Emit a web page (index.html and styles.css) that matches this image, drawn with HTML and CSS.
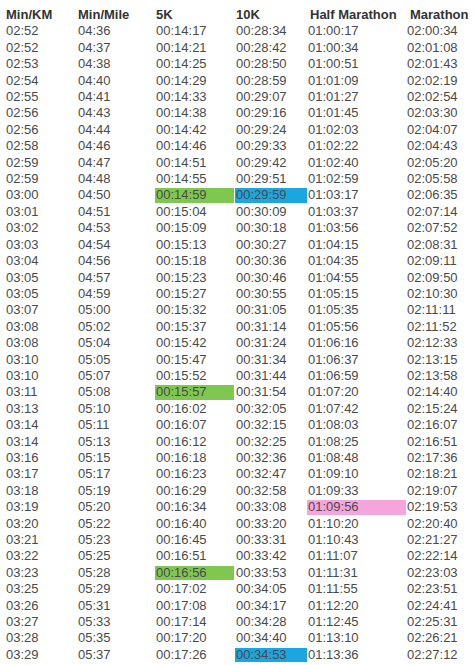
FILE: index.html
```html
<!DOCTYPE html>
<html>
<head>
<meta charset="utf-8">
<link rel="stylesheet" href="styles.css">
</head>
<body>
<div class="table">
<div class="row head"><span>Min/KM</span><span>Min/Mile</span><span>5K</span><span>10K</span><span class="half">Half Marathon</span><span class="mar">Marathon</span></div>
<div class="row"><span>02:52</span><span>04:36</span><span>00:14:17</span><span>00:28:34</span><span>01:00:17</span><span>02:00:34</span></div>
<div class="row"><span>02:52</span><span>04:37</span><span>00:14:21</span><span>00:28:42</span><span>01:00:34</span><span>02:01:08</span></div>
<div class="row"><span>02:53</span><span>04:38</span><span>00:14:25</span><span>00:28:50</span><span>01:00:51</span><span>02:01:43</span></div>
<div class="row"><span>02:54</span><span>04:40</span><span>00:14:29</span><span>00:28:59</span><span>01:01:09</span><span>02:02:19</span></div>
<div class="row"><span>02:55</span><span>04:41</span><span>00:14:33</span><span>00:29:07</span><span>01:01:27</span><span>02:02:54</span></div>
<div class="row"><span>02:56</span><span>04:43</span><span>00:14:38</span><span>00:29:16</span><span>01:01:45</span><span>02:03:30</span></div>
<div class="row"><span>02:56</span><span>04:44</span><span>00:14:42</span><span>00:29:24</span><span>01:02:03</span><span>02:04:07</span></div>
<div class="row"><span>02:58</span><span>04:46</span><span>00:14:46</span><span>00:29:33</span><span>01:02:22</span><span>02:04:43</span></div>
<div class="row"><span>02:59</span><span>04:47</span><span>00:14:51</span><span>00:29:42</span><span>01:02:40</span><span>02:05:20</span></div>
<div class="row"><span>02:59</span><span>04:48</span><span>00:14:55</span><span>00:29:51</span><span>01:02:59</span><span>02:05:58</span></div>
<div class="row"><span>03:00</span><span>04:50</span><span class="hl green">00:14:59</span><span class="hl blue">00:29:59</span><span>01:03:17</span><span>02:06:35</span></div>
<div class="row"><span>03:01</span><span>04:51</span><span>00:15:04</span><span>00:30:09</span><span>01:03:37</span><span>02:07:14</span></div>
<div class="row"><span>03:02</span><span>04:53</span><span>00:15:09</span><span>00:30:18</span><span>01:03:56</span><span>02:07:52</span></div>
<div class="row"><span>03:03</span><span>04:54</span><span>00:15:13</span><span>00:30:27</span><span>01:04:15</span><span>02:08:31</span></div>
<div class="row"><span>03:04</span><span>04:56</span><span>00:15:18</span><span>00:30:36</span><span>01:04:35</span><span>02:09:11</span></div>
<div class="row"><span>03:05</span><span>04:57</span><span>00:15:23</span><span>00:30:46</span><span>01:04:55</span><span>02:09:50</span></div>
<div class="row"><span>03:05</span><span>04:59</span><span>00:15:27</span><span>00:30:55</span><span>01:05:15</span><span>02:10:30</span></div>
<div class="row"><span>03:07</span><span>05:00</span><span>00:15:32</span><span>00:31:05</span><span>01:05:35</span><span>02:11:11</span></div>
<div class="row"><span>03:08</span><span>05:02</span><span>00:15:37</span><span>00:31:14</span><span>01:05:56</span><span>02:11:52</span></div>
<div class="row"><span>03:08</span><span>05:04</span><span>00:15:42</span><span>00:31:24</span><span>01:06:16</span><span>02:12:33</span></div>
<div class="row"><span>03:10</span><span>05:05</span><span>00:15:47</span><span>00:31:34</span><span>01:06:37</span><span>02:13:15</span></div>
<div class="row"><span>03:10</span><span>05:07</span><span>00:15:52</span><span>00:31:44</span><span>01:06:59</span><span>02:13:58</span></div>
<div class="row"><span>03:11</span><span>05:08</span><span class="hl green">00:15:57</span><span>00:31:54</span><span>01:07:20</span><span>02:14:40</span></div>
<div class="row"><span>03:13</span><span>05:10</span><span>00:16:02</span><span>00:32:05</span><span>01:07:42</span><span>02:15:24</span></div>
<div class="row"><span>03:14</span><span>05:11</span><span>00:16:07</span><span>00:32:15</span><span>01:08:03</span><span>02:16:07</span></div>
<div class="row"><span>03:14</span><span>05:13</span><span>00:16:12</span><span>00:32:25</span><span>01:08:25</span><span>02:16:51</span></div>
<div class="row"><span>03:16</span><span>05:15</span><span>00:16:18</span><span>00:32:36</span><span>01:08:48</span><span>02:17:36</span></div>
<div class="row"><span>03:17</span><span>05:17</span><span>00:16:23</span><span>00:32:47</span><span>01:09:10</span><span>02:18:21</span></div>
<div class="row"><span>03:18</span><span>05:19</span><span>00:16:29</span><span>00:32:58</span><span>01:09:33</span><span>02:19:07</span></div>
<div class="row"><span>03:19</span><span>05:20</span><span>00:16:34</span><span>00:33:08</span><span class="hl pink">01:09:56</span><span>02:19:53</span></div>
<div class="row"><span>03:20</span><span>05:22</span><span>00:16:40</span><span>00:33:20</span><span>01:10:20</span><span>02:20:40</span></div>
<div class="row"><span>03:21</span><span>05:23</span><span>00:16:45</span><span>00:33:31</span><span>01:10:43</span><span>02:21:27</span></div>
<div class="row"><span>03:22</span><span>05:25</span><span>00:16:51</span><span>00:33:42</span><span>01:11:07</span><span>02:22:14</span></div>
<div class="row"><span>03:23</span><span>05:28</span><span class="hl green">00:16:56</span><span>00:33:53</span><span>01:11:31</span><span>02:23:03</span></div>
<div class="row"><span>03:25</span><span>05:29</span><span>00:17:02</span><span>00:34:05</span><span>01:11:55</span><span>02:23:51</span></div>
<div class="row"><span>03:26</span><span>05:31</span><span>00:17:08</span><span>00:34:17</span><span>01:12:20</span><span>02:24:41</span></div>
<div class="row"><span>03:27</span><span>05:33</span><span>00:17:14</span><span>00:34:28</span><span>01:12:45</span><span>02:25:31</span></div>
<div class="row"><span>03:28</span><span>05:35</span><span>00:17:20</span><span>00:34:40</span><span>01:13:10</span><span>02:26:21</span></div>
<div class="row"><span>03:29</span><span>05:37</span><span>00:17:26</span><span class="hl blue">00:34:53</span><span>01:13:36</span><span>02:27:12</span></div>
</div>
</body>
</html>
```
FILE: styles.css
```css
html, body {
  margin: 0;
  padding: 0;
  background: #ffffff;
}
body {
  font-family: "Liberation Sans", Arial, sans-serif;
  font-size: 13px;
  color: #4a4a4a;
}
.table {
  padding: 7px 0 0 5px;
}
.row {
  display: grid;
  grid-template-columns: 72px 78px 80px 72px 99px 1fr;
  height: 16.42px;
  line-height: 16.42px;
}
.row span {
  padding-left: 1px;
  white-space: nowrap;
}
.head {
  font-weight: bold;
  color: #333333;
}
.head .half {
  padding-left: 3px;
}
.head .mar {
  padding-left: 4px;
}
.hl {
  line-height: 14.42px;
  border-top: 1px solid transparent;
  border-bottom: 1px solid transparent;
  background-clip: padding-box;
}
.green {
  background-color: #7fc84f;
  margin-right: 1px;
}
.blue {
  background-color: #1ba6e2;
}
.pink {
  background-color: #f5a4dc;
}
```
